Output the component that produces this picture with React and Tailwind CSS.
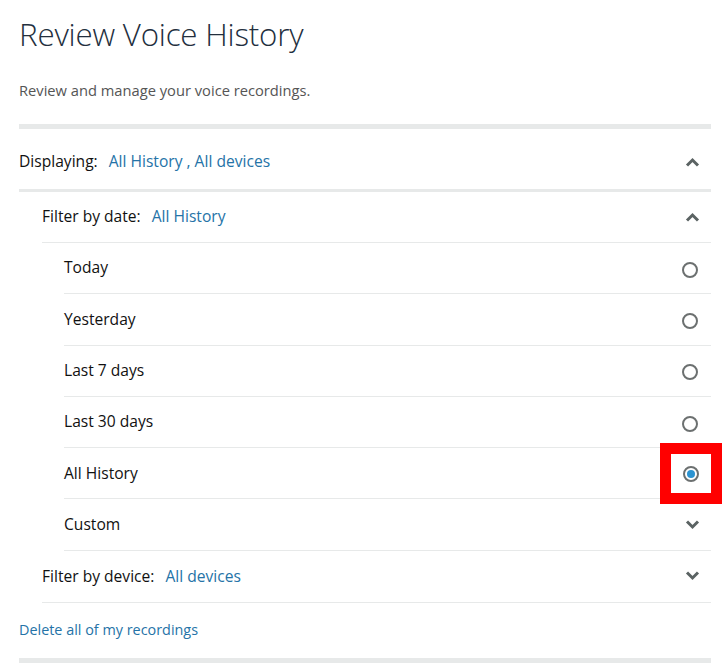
import { useState } from "react";

const dateOptions = ["Today", "Yesterday", "Last 7 days", "Last 30 days", "All History"];

function Chevron({ up }) {
  return (
    <svg width="15" height="10" viewBox="0 0 15 10" className="text-[#5b6363]">
      <path
        d={up ? "M2 8.5 L7.5 3 L13 8.5" : "M2 1.5 L7.5 7 L13 1.5"}
        fill="none"
        stroke="currentColor"
        strokeWidth="3"
      />
    </svg>
  );
}

function Radio({ checked }) {
  return (
    <span className="flex h-[16px] w-[16px] items-center justify-center rounded-full border-2 border-[#6c7070]">
      {checked && <span className="h-[8px] w-[8px] rounded-full bg-[#2b93d1]"></span>}
    </span>
  );
}

export default function App() {
  const [selected, setSelected] = useState("All History");

  return (
    <div className="min-h-screen bg-white pl-[19px] pr-[11px] text-[#111] font-['Open_Sans',sans-serif]">
      <h1 className="pt-[14px] text-[31.3px] font-light leading-[40px] text-[#232f3e] tracking-[-0.2px]">
        Review Voice History
      </h1>
      <p className="mt-[26px] text-[14.7px] leading-[20px] text-[#555]">
        Review and manage your voice recordings.
      </p>

      <div className="mt-[24px] h-[5px] bg-[#e7e9e9]"></div>

      {/* Displaying */}
      <div className="flex h-[60px] items-center justify-between pt-[6px] text-[15.6px]">
        <div>
          <span>Displaying:</span>
          <span className="ml-[11px] text-[#2573a7]">All History , All devices</span>
        </div>
        <div className="mr-[11px]">
          <Chevron up />
        </div>
      </div>
      <div className="h-[3px] bg-[#e7e9e9]"></div>

      <div className="pl-[23px]">
        {/* Filter by date */}
        <div className="flex h-[51px] items-center justify-between border-b border-[#e7e9e9] text-[15.6px]">
          <div>
            <span>Filter by date:</span>
            <span className="ml-[11px] text-[#2573a7]">All History</span>
          </div>
          <div className="mr-[11px]">
            <Chevron up />
          </div>
        </div>

        <div className="pl-[22px]">
          {dateOptions.map((opt) => (
            <div
              key={opt}
              onClick={() => setSelected(opt)}
              className="flex h-[51.3px] cursor-pointer items-center justify-between border-b border-[#e7e9e9] text-[15.6px]"
            >
              <span>{opt}</span>
              {opt === "All History" ? (
                <span className="-my-[4px] -mr-[11px] flex h-[61px] w-[62px] items-center justify-center border-[11px] border-[#ff0000] bg-white pt-[2px]">
                  <Radio checked={selected === opt} />
                </span>
              ) : (
                <span className="mr-[13px] pt-[3px]">
                  <Radio checked={selected === opt} />
                </span>
              )}
            </div>
          ))}
          <div className="flex h-[51.3px] items-center justify-between border-b border-[#e7e9e9] text-[15.6px]">
            <span>Custom</span>
            <div className="mr-[11px]">
              <Chevron />
            </div>
          </div>
        </div>

        {/* Filter by device */}
        <div className="flex h-[52px] items-center justify-between border-b border-[#e7e9e9] text-[15.6px]">
          <div>
            <span>Filter by device:</span>
            <span className="ml-[11px] text-[#2573a7]">All devices</span>
          </div>
          <div className="mr-[11px]">
            <Chevron />
          </div>
        </div>
      </div>

      <div className="flex h-[55px] items-center text-[14.4px] text-[#2573a7]">
        Delete all of my recordings
      </div>
      <div className="h-[5px] bg-[#e7e9e9]"></div>
    </div>
  );
}
